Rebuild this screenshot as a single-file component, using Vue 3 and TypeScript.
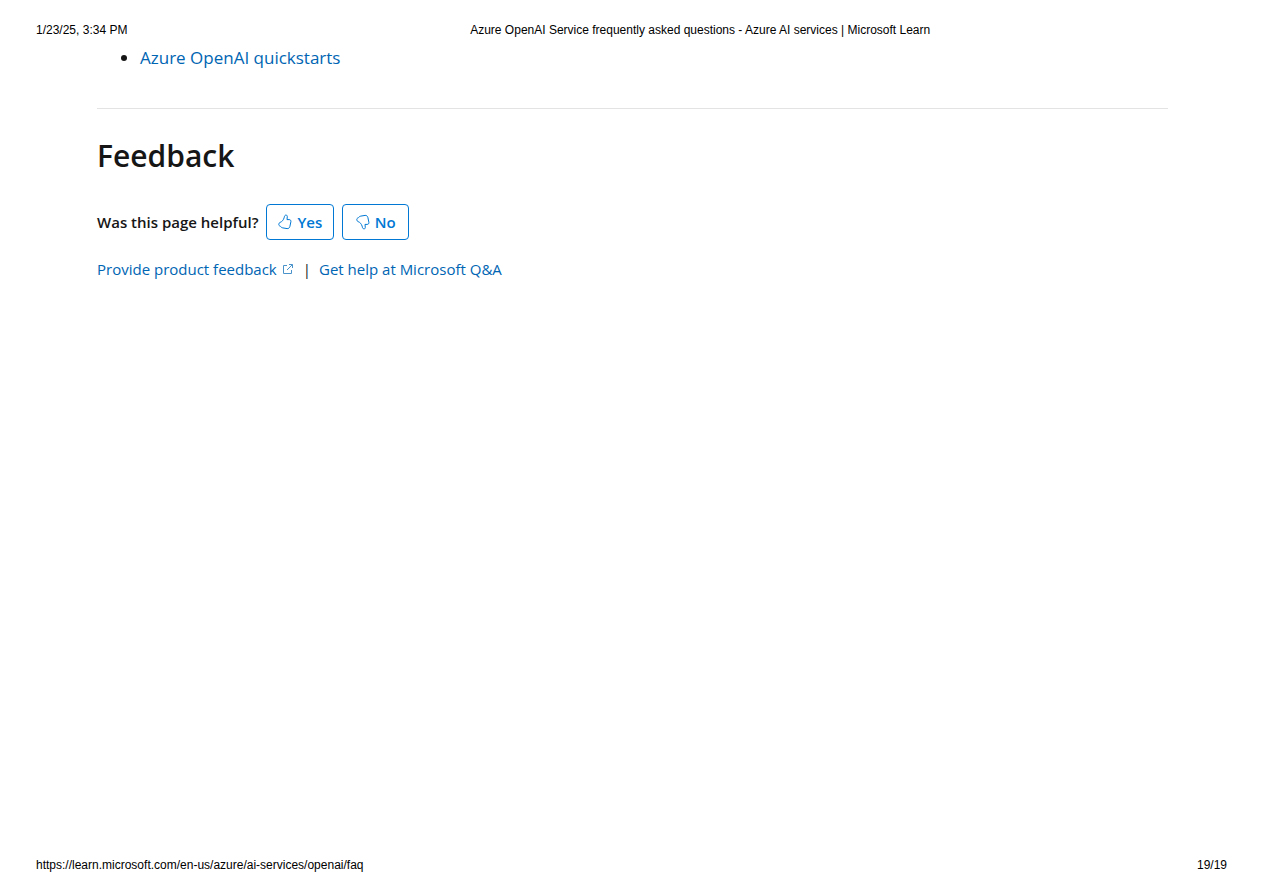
<script setup lang="ts">
const printedAt = '1/23/25, 3:34 PM'
const documentTitle =
  'Azure OpenAI Service frequently asked questions - Azure AI services | Microsoft Learn'
const sourceUrl = 'https://learn.microsoft.com/en-us/azure/ai-services/openai/faq'
const pageNumber = '19/19'
</script>

<template>
  <div class="sheet">
    <header class="running-head">
      <span>{{ printedAt }}</span>
      <span class="doc-title">{{ documentTitle }}</span>
    </header>

    <main class="content">
      <ul class="links">
        <li><a href="#quickstarts">Azure OpenAI quickstarts</a></li>
      </ul>
      <hr class="rule" />
      <section aria-labelledby="feedback-title">
        <h2 id="feedback-title" class="title">Feedback</h2>
        <div class="rating">
          <span class="question">Was this page helpful?</span>
          <button type="button" class="vote">
            <svg class="thumb" viewBox="0 0 14 16" aria-hidden="true">
              <path d="M7.4 1.2c1-.4 1.9.2 1.9 1.3L9 5.6h2.1c1.3 0 2 .9 1.8 2.1l-1 4.7c-.3 1.4-1.4 2.4-2.8 2.2l-4.3-.7c-.8-.1-1.4-.5-1.9-1.1-.4-.5-.8-.7-1.3-.9-.6-.3-.9-.8-.8-1.4l.2-.9c.1-.6.5-1 1.1-1.2 2-.8 3.2-2.2 4-4.5.3-1 .4-2.3 1.3-2.7Z" />
            </svg>
            <span>Yes</span>
          </button>
          <button type="button" class="vote">
            <svg class="thumb thumb-down" viewBox="0 0 14 16" aria-hidden="true">
              <path d="M7.4 1.2c1-.4 1.9.2 1.9 1.3L9 5.6h2.1c1.3 0 2 .9 1.8 2.1l-1 4.7c-.3 1.4-1.4 2.4-2.8 2.2l-4.3-.7c-.8-.1-1.4-.5-1.9-1.1-.4-.5-.8-.7-1.3-.9-.6-.3-.9-.8-.8-1.4l.2-.9c.1-.6.5-1 1.1-1.2 2-.8 3.2-2.2 4-4.5.3-1 .4-2.3 1.3-2.7Z" />
            </svg>
            <span>No</span>
          </button>
        </div>
        <div class="help">
          <a class="external" href="#product-feedback">
            <span>Provide product feedback</span>
            <svg class="out" viewBox="0 0 10 10" aria-hidden="true">
              <path d="M4 1.5H.5v8h8V6M6 .5h3.5V4M9.3.7 4 6" />
            </svg>
          </a>
          <span class="bar">|</span>
          <a href="#qna">Get help at Microsoft Q&amp;A</a>
        </div>
      </section>
    </main>

    <footer class="running-foot">
      <span>{{ sourceUrl }}</span>
      <span>{{ pageNumber }}</span>
    </footer>
  </div>
</template>

<style>
body {
  margin: 0;
  background: #fff;
}
</style>

<style scoped>
.sheet {
  display: flex;
  flex-direction: column;
  box-sizing: border-box;
  min-height: 100vh;
  padding: 22px 36px 20px;
  color: #161616;
  font-family: "Open Sans", "Noto Sans", sans-serif;
  font-size: 15px;
}
.running-head,
.running-foot {
  display: flex;
  color: #000;
  font: 12px/16px "Liberation Sans", Arial, sans-serif;
}
.running-head {
  gap: 46px;
}
.doc-title {
  flex: 1;
  text-align: center;
}
.running-foot {
  justify-content: space-between;
}
.content {
  flex: 1;
  padding: 8px 59px 0 61px;
}
a {
  color: #0065b3;
  text-decoration: none;
}
.links {
  margin: 0;
  padding-left: 43px;
  font-size: 17px;
  line-height: 24px;
}
.rule {
  height: 1px;
  margin: 38px 0 0;
  border: 0;
  background: #e3e3e3;
}
.title {
  margin: 27px 0 0;
  font-size: 30px;
  font-weight: 600;
  line-height: 40px;
}
.rating {
  display: flex;
  align-items: center;
  gap: 8px;
  margin-top: 28px;
}
.question {
  font-weight: 600;
}
.vote {
  display: flex;
  align-items: center;
  justify-content: center;
  gap: 5px;
  box-sizing: border-box;
  min-width: 67px;
  height: 36px;
  padding: 0 11px;
  border: 1px solid #0078d4;
  border-radius: 4px;
  background: #fff;
  color: #0078d4;
  font: inherit;
  font-weight: 600;
}
.thumb {
  width: 14px;
  height: 16px;
  fill: none;
  stroke: currentColor;
  stroke-width: 1;
}
.thumb-down {
  transform: scaleY(-1);
}
.help {
  display: flex;
  align-items: center;
  margin-top: 17px;
  line-height: 24px;
}
.external {
  display: flex;
  align-items: center;
  gap: 6px;
}
.out {
  width: 10px;
  height: 10px;
  fill: none;
  stroke: #4a93ca;
  stroke-width: 1;
}
.bar {
  margin: 0 8px 0 10px;
}
</style>
